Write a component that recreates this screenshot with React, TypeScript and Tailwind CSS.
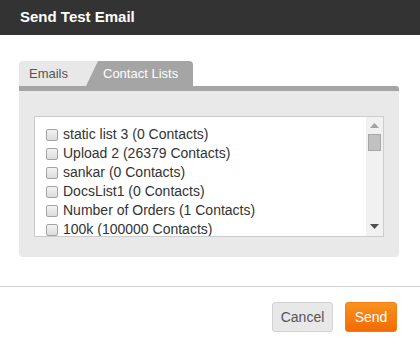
const lists = [
  "static list 3 (0 Contacts)",
  "Upload 2 (26379 Contacts)",
  "sankar (0 Contacts)",
  "DocsList1 (0 Contacts)",
  "Number of Orders (1 Contacts)",
  "100k (100000 Contacts)",
];

function Checkbox() {
  return (
    <span className="block h-[12px] w-[12px] shrink-0 rounded-[2px] border border-[#a3a3a3] bg-gradient-to-b from-[#f3f3f3] to-[#dcdcdc]" />
  );
}

export default function App() {
  return (
    <div className="h-[346px] w-[420px] bg-white font-['Liberation_Sans',Arial,sans-serif]">
      {/* Header */}
      <div className="flex h-[35px] items-center bg-[#333333] px-[20px]">
        <h2 className="text-[15px] font-bold text-white">Send Test Email</h2>
      </div>

      {/* Body */}
      <div className="px-[19px] pt-[26px]">
        {/* Tabs */}
        <div className="flex h-[25px] items-stretch">
          <div className="relative flex w-[80px] items-center rounded-tl-[4px] bg-[#e8e8e8] pl-[10px] text-[13px] text-[#555555]">
            Emails
          </div>
          <div className="-ml-[13px] flex w-[107px] items-center rounded-tr-[4px] bg-[#a5a5a5] pl-[17px] text-[13px] text-white [clip-path:polygon(12px_0,100%_0,100%_100%,0_100%)]">
            Contact Lists
          </div>
        </div>
        <div className="h-[5px] w-[380px] rounded-tr-[3px] bg-[#a5a5a5]" />

        {/* Panel */}
        <div className="h-[166px] w-[380px] rounded-b-[4px] bg-[#e9e9e9] px-[15px] pt-[25px]">
          <div className="flex h-[121px] w-[350px] border border-[#cccccc] bg-white">
            <ul className="flex-1 overflow-hidden pt-[8px] pl-[11px]">
              {lists.map((l) => (
                <li key={l} className="flex h-[19px] items-center gap-[5px] text-[14px] text-[#333333]">
                  <Checkbox />
                  <span className="whitespace-nowrap">{l}</span>
                </li>
              ))}
            </ul>
            {/* Scrollbar */}
            <div className="flex w-[17px] flex-col items-center bg-[#f1f1f1]">
              <svg width="9" height="5" viewBox="0 0 9 5" className="mt-[6px]">
                <polygon points="0,5 9,5 4.5,0" fill="#a3a3a3" />
              </svg>
              <div className="mt-[6px] h-[17px] w-[13px] border border-[#a8a8a8] bg-[#c1c1c1]" />
              <div className="flex-1" />
              <svg width="9" height="5" viewBox="0 0 9 5" className="mb-[7px]">
                <polygon points="0,0 9,0 4.5,5" fill="#505050" />
              </svg>
            </div>
          </div>
        </div>
      </div>

      {/* Footer */}
      <div className="mt-[29px] border-t border-[#d4d4d4]">
        <div className="flex justify-end gap-[12px] pt-[15px] pr-[23px]">
          <button className="h-[30px] w-[61px] rounded-[3px] border border-[#d3d3d3] bg-[#e8e8e8] text-[14px] text-[#555555]">
            Cancel
          </button>
          <button className="h-[30px] w-[52px] rounded-[3px] border border-[#f57f17] bg-gradient-to-b from-[#f8921e] to-[#f26a00] text-[14px] text-white">
            Send
          </button>
        </div>
      </div>
    </div>
  );
}
